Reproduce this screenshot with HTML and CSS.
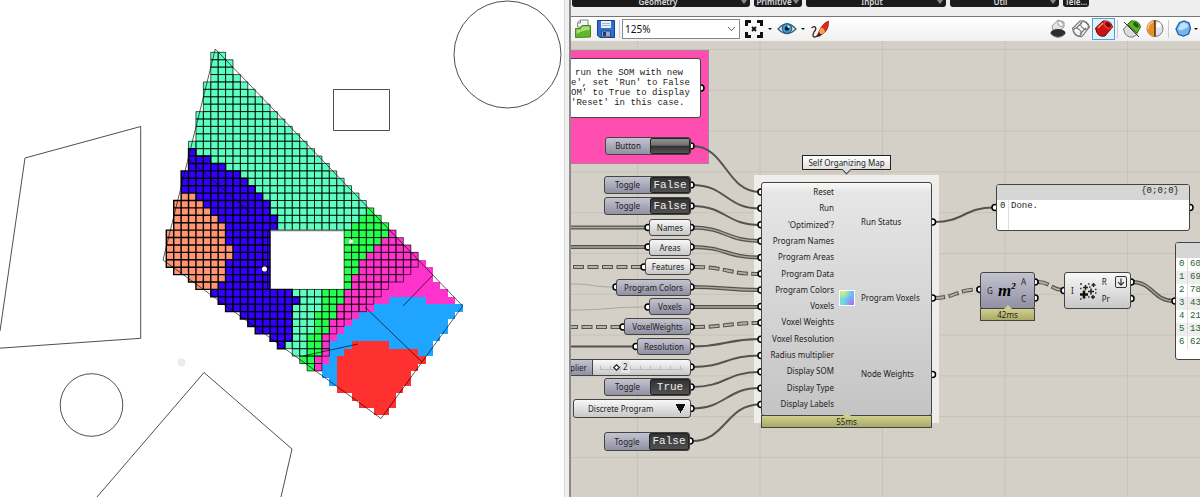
FILE: index.html
```html
<!DOCTYPE html>
<html lang="en">
<head>
<meta charset="utf-8">
<title>Self Organizing Map</title>
<link rel="stylesheet" href="styles.css">
</head>
<body>
<main class="workspace">
  <section class="viewport" aria-label="Site plan">
    <svg class="plan" width="564" height="497" viewBox="0 0 564 497" role="img" aria-label="Voxel program map">
      <g class="site">
        <path d="M25 158L140.700 126.500V338.300L-5 348.500M25 158L0 331"/>
        <circle cx="91.500" cy="405" r="31.300"/>
        <path d="M97 497L204 372.500L292 449L281 497"/>
        <circle cx="507.500" cy="54.500" r="53.500"/>
        <path d="M333.500 89.500h56v41h-56z"/>
      </g>
      <circle cx="181.500" cy="362.500" r="4" fill="#ebebeb"/>
      <g id="voxels" transform="translate(166.300 52.300) scale(7.410)"></g>
      <g class="outline">
        <path d="M215.300 49L462.700 306L381 418.500L163 260Z"/>
        <path d="M188 159L250 212M433 275L403 306M365 307L422 362M303 356L358 344"/>
      </g>
      <path d="M270.500 230.500h73.500" stroke="#777" stroke-width="1.500"/>
      <path d="M267.500 231v59" stroke="#000" stroke-width=".8"/>
      <circle cx="264.500" cy="269" r="2.500" fill="#fff"/>
      <circle cx="351" cy="241.500" r="2.200" fill="#f4e8ee"/>
    </svg>
  </section>
  <div class="splitter"></div>
  <section class="editor">
    <div class="ribbon">
      <span class="tab tab-geometry">Geometry<i></i></span>
      <span class="tab tab-primitive">Primitive<i></i></span>
      <span class="tab tab-input">Input<i></i></span>
      <span class="tab tab-util">Util<i></i></span>
      <span class="tab tab-tele">Tele...</span>
    </div>
    <div class="toolbar">
      <button class="tool" aria-label="Open"><svg width="20" height="20" viewBox="0 0 20 20"><path d="M4.500 8V3.500l3-2.500H15v8z" fill="#f5f5f5" stroke="#888"/><path d="M7.500 1v3h-3" fill="none" stroke="#888"/><path d="M2.500 9.500h4l2.500-3h8.500V18l-15 .5z" fill="#62b52f" stroke="#3f8a1a"/><path d="M3.500 10.500h4l2-3h7V11Q10 11 3.500 15z" fill="#a5dd78"/></svg></button>
      <button class="tool" aria-label="Save"><svg width="20" height="20" viewBox="0 0 20 20"><path d="M1.500 1.500h17v17H4l-2.500-2z" fill="#2f6fd0" stroke="#153f92"/><path d="M5 2h10v7H5z" fill="#e9eef5"/><path d="M6 4.500h8M6 6.500h8" stroke="#a9b4c4"/><path d="M5.500 12h9v6h-9z" fill="#9da8b8" stroke="#244b8c"/><path d="M7 13h3v4H7z" fill="#1c3a78"/></svg></button>
      <span class="separator"></span>
      <select class="zoom" aria-label="Zoom"><option>125%</option></select>
      <button class="tool" aria-label="Zoom extents"><svg width="20" height="20" viewBox="0 0 20 20"><path d="M2.500 7V2.500H7M13 2.500h4.500V7M17.500 13v4.500H13M7 17.500H2.500V13" fill="none" stroke="#111" stroke-width="3"/><path d="M8 8l4 4M12 8l-4 4" stroke="#111" stroke-width="1.800"/></svg></button>
      <i class="caret"></i>
      <button class="tool" aria-label="Preview"><svg width="20" height="20" viewBox="0 0 20 20"><path d="M1 10Q10 0 19 10Q10 19 1 10z" fill="#dcebf3" stroke="#4d6470" stroke-width="1.300"/><circle cx="10" cy="9.500" r="4.800" fill="#39a0d6" stroke="#17587f"/><circle cx="10" cy="9.500" r="2.200" fill="#061722"/><circle cx="11.500" cy="7.800" r="1.100" fill="#fff"/></svg></button>
      <i class="caret"></i>
      <button class="tool" aria-label="Sketch"><svg width="20" height="20" viewBox="0 0 20 20"><path d="M18.500 2q.5 6-2.500 10l-4 3.500q-3 .5-3-3l2-4q3-5 7.500-6.500z" fill="#dc2b20" stroke="#8d1913" stroke-width=".7"/><path d="M11 8.500q3 .5 4 4L12 15.500q-3 .5-3-3z" fill="#f9a04e"/><path d="M9 12q0 3 3.500 3.500Q9 18.500 5.500 18q2-2 3.500-6z" fill="#671b15"/><path d="M1.500 9q3-2.500 4-.5t-1.500 4.500q-2 4 0 5 2 .5 5-2.500" fill="none" stroke="#40211d" stroke-width="1.300"/></svg></button>
      <span class="spacer"></span>
      <button class="tool" aria-label="No preview"><svg width="20" height="20" viewBox="0 0 20 20"><path d="M4 7l6-6 6 2v5l-5 4-6-1z" fill="#e2e2e2" stroke="#999"/><ellipse cx="12.500" cy="4.800" rx="2" ry="3.200" transform="rotate(-45 12.500 4.800)" fill="#f8f8f8" stroke="#aaa"/><ellipse cx="10" cy="14" rx="7.500" ry="4" fill="#2c2f31"/><path d="M3 15q7 7 14 0" fill="none" stroke="#888"/></svg></button>
      <button class="tool" aria-label="Wireframe preview"><svg width="20" height="20" viewBox="0 0 20 20"><g fill="none" stroke="#777" stroke-width="1.200"><path d="M1.500 9.500L9 2q7-1.500 9.500 6L11 17.500q-8 1-9.500-8z"/><ellipse cx="13.500" cy="6.500" rx="3" ry="4.500" transform="rotate(-45 13.500 6.500)"/><ellipse cx="6.500" cy="13" rx="3" ry="4.500" transform="rotate(-45 6.500 13)"/><path d="M5 9.500l6-6M9 15l6-6"/></g></svg></button>
      <button class="tool selected" aria-label="Shaded preview" aria-pressed="true"><svg width="20" height="20" viewBox="0 0 20 20"><path d="M1.500 9L9 2q8-1 9.500 6L11 17q-8 2-9.500-8z" fill="#c91313" stroke="#6d0909"/><ellipse cx="13.500" cy="6" rx="3.500" ry="5" transform="rotate(-45 13.500 6)" fill="#e33b30"/><ellipse cx="14" cy="5.700" rx="2" ry="3.200" transform="rotate(-45 14 5.700)" fill="#760707"/><path d="M4 9l5-5" stroke="#f18a80" stroke-width="1.600"/></svg></button>
      <span class="separator"></span>
      <button class="tool" aria-label="Preview selected"><svg width="20" height="20" viewBox="0 0 20 20"><path d="M1.500 10l4-4 10 9-4.500 3q-8 1-9.500-8z" fill="#ddd" stroke="#777"/><path d="M5.500 5.500L9 2q8-1 9.500 6L15 14z" fill="#5db52a" stroke="#286c0a"/><ellipse cx="14" cy="5.800" rx="2" ry="3.300" transform="rotate(-45 14 5.800)" fill="#22630a"/><path d="M2 3l15 15" stroke="#333"/></svg></button>
      <button class="tool" aria-label="Preview settings"><svg width="20" height="20" viewBox="0 0 20 20"><circle cx="10" cy="9.500" r="8" fill="#e4e4e4" stroke="#777"/><path d="M10 1.500a8 8 0 0 0 0 16z" fill="#f28c20"/><path d="M10 1.500v16" stroke="#4a2b10" stroke-width="1.500"/><path d="M8 3a7 7 0 0 0-5 7" fill="none" stroke="#fac888" stroke-width="1.500"/><circle cx="13.500" cy="6" r="2.500" fill="#fff"/></svg></button>
      <span class="separator"></span>
      <button class="tool" aria-label="Mesh quality"><svg width="20" height="20" viewBox="0 0 20 20"><path d="M6.500 3.500L11 2l5 2 1.500 5.500-2 5.500-5 2-5-1.500L3 10z" fill="#72b6ef" stroke="#235fa6" stroke-width="1.300"/><path d="M7.500 5L11 3.500l3.500 1.500.5 3-7 3.500L5 10z" fill="#bfe2fb"/></svg></button>
      <i class="caret last"></i>
    </div>

    <div class="canvas">
      <div class="group"></div>
      <div class="halo"></div>
      <svg class="wires" width="640" height="456" viewBox="571 41 640 456" aria-hidden="true">
        <defs>
          <path id="w-names" d="M571 227.500H647M692 227.500C726 227.500 726 241 760 241"/>
          <path id="w-areas" d="M571 247H647M692 247C726 247 726 257.500 760 257.500"/>
          <path id="w-colors" d="M692 287C726 287 726 290 760 290"/>
          <path id="w-voxels" d="M692 307H760"/>
          <path id="w-result" d="M1132 282C1153 282 1153 301 1174 301"/>
          <path id="w-features" d="M573 267H643"/>
          <path id="w-weights" d="M567 327H622"/>
          <path id="w-data" d="M694 267C727 267 727 274 760 274"/>
          <path id="w-vw" d="M694 327C727 327 727 323 760 323"/>
          <path id="w-pv" d="M934 298C956 298 956 289.500 978 289.500"/>
          <path id="w-area" d="M1038 282C1050 282 1052 290 1063 290"/>
        </defs>
        <g class="single">
          <path d="M692 146C726 146 726 192 760 192"/>
          <path d="M692 185C726 185 726 208.500 760 208.500"/>
          <path d="M692 206C726 206 726 225 760 225"/>
          <path d="M571 346.500H635M692 346.500C726 346.500 726 339 760 339"/>
          <path d="M692 367C726 367 726 355.500 760 355.500"/>
          <path d="M692 387C726 387 726 372 760 372"/>
          <path d="M692 408.500C726 408.500 726 388 760 388"/>
          <path d="M692 441C726 441 726 404.500 760 404.500"/>
          <path d="M934 222C964 222 964 207.500 994 207.500"/>
        </g>
        <path class="faint" d="M571 284C593 284 593 287 614 287M571 310C609 310 609 307 647 307"/>
        <g class="double"><use href="#w-names"/><use href="#w-areas"/><use href="#w-colors"/><use href="#w-voxels"/><use href="#w-result"/></g>
        <g class="core"><use href="#w-names"/><use href="#w-areas"/><use href="#w-colors"/><use href="#w-voxels"/><use href="#w-result"/></g>
        <g class="tree"><use href="#w-features"/><use href="#w-weights"/><use href="#w-data"/><use href="#w-vw"/><use href="#w-pv"/><use href="#w-area"/></g>
        <g class="tree-core"><use href="#w-features"/><use href="#w-weights"/><use href="#w-data"/><use href="#w-vw"/><use href="#w-pv"/><use href="#w-area"/></g>
        <g class="grips" id="grips"></g>
      </svg>

      <div class="note"><span class="first">run the SOM with new</span><span>e', set 'Run' to False</span><span>OM' to True to display</span><span>'Reset' in this case.</span></div>

      <div class="node split n-button"><label for="b0">Button</label><button id="b0" class="push" aria-label="Button"></button></div>
      <div class="node split n-toggle1"><label for="b1">Toggle</label><button id="b1">False</button></div>
      <div class="node split n-toggle2"><label for="b2">Toggle</label><button id="b2">False</button></div>
      <div class="node param light n-names">Names</div>
      <div class="node param light n-areas">Areas</div>
      <div class="node param light n-features">Features</div>
      <div class="node param n-colors">Program Colors</div>
      <div class="node param n-voxels">Voxels</div>
      <div class="node param n-weights">VoxelWeights</div>
      <div class="node param n-resolution">Resolution</div>
      <div class="node light n-slider"><label for="s1">plier</label><div class="slide"><input id="s1" type="range" min="1" max="8" value="2"><output for="s1">2</output></div></div>
      <div class="node split n-toggle3"><label for="b3">Toggle</label><button id="b3">True</button></div>
      <select class="node light n-list" aria-label="Display type"><option>Discrete Program</option></select>
      <div class="node split n-toggle4"><label for="b4">Toggle</label><button id="b4">False</button></div>

      <div class="tooltip">Self Organizing Map</div>
      <article class="node som">
        <ul class="inputs"><li>Reset</li><li>Run</li><li>'Optimized'?</li><li>Program Names</li><li>Program Areas</li><li>Program Data</li><li>Program Colors</li><li>Voxels</li><li>Voxel Weights</li><li>Voxel Resolution</li><li>Radius multiplier</li><li>Display SOM</li><li>Display Type</li><li>Display Labels</li></ul>
        <div class="som-icon"></div>
        <ul class="outputs"><li>Run Status</li><li>Program Voxels</li><li>Node Weights</li></ul>
      </article>
      <div class="timer som-timer">55ms</div>

      <div class="node panel status"><header>{0;0;0}</header><div class="line"><span>0</span><b>Done.</b></div></div>

      <article class="node area"><span>G</span><em>m<sup>2</sup></em><ul><li>A</li><li>C</li></ul></article>
      <div class="timer area-timer">42ms</div>

      <article class="node light result"><span>I</span>
        <svg width="18" height="18" viewBox="0 0 18 18"><path d="M5 8.500v8M1 12.500h8" stroke="#111" stroke-width="2.600"/><path d="M6.500 3v5M4 5.500h5M12 6.500v6M9 9.500h6M14.500 1v4M12.500 3h4M14 13v4M12 15h4" stroke="#222" stroke-width="1.500"/><path d="M1 2h2M9 2h1.500M1 6.500h1.500M16 7.500h1.500M16 11h1.500M9 15h1.500M10 5h1.500M1 17h1.500" stroke="#333" stroke-width="1.500"/></svg>
        <ul><li>R</li><li>Pr</li></ul>
        <svg class="down" width="12" height="12" viewBox="0 0 12 12"><rect x=".5" y=".5" width="11" height="11" rx="1.500" fill="#eee" stroke="#333"/><path d="M6 2.500v6.500M3 6.200l3 3 3-3" fill="none" stroke="#333" stroke-width="1.200"/></svg>
      </article>

      <div class="node panel values"><header></header>
        <div class="line"><span>0</span><b>60</b></div><div class="line"><span>1</span><b>69</b></div><div class="line"><span>2</span><b>78</b></div><div class="line"><span>3</span><b>43</b></div><div class="line"><span>4</span><b>21</b></div><div class="line"><span>5</span><b>13</b></div><div class="line"><span>6</span><b>62</b></div>
      </div>
    </div>
  </section>
</main>
<script src="voxels.js"></script>
</body>
</html>
```
FILE: voxels.js
```js
// Each row: first column, then runs of <count><program>.
// T teal, B blue, O orange, G green, P pink with cell lines, Q pink, U sky, R red, - empty.
const rows = [
  "6 2T", "6 3T", "6 3T", "6 4T", "5 6T", "5 7T", "5 8T", "5 9T",
  "4 11T", "4 12T", "4 13T", "4 14T", "3 16T", "3 1B 16T", "3 3B 15T",
  "3 5B 14T", "2 8B 13T", "2 9B 13T", "2 10B 13T", "2 2O 9B 13T",
  "1 4O 9B 13T", "1 5O 8B 13T 1G", "1 6O 8B 11T 3G", "1 7O 7B 10T 5G",
  "0 8O 6B 10- 6G 1P", "0 8O 6B 10- 5G 3P", "0 9O 5B 10- 4G 5P",
  "0 9O 5B 10- 3G 7P", "0 8O 6B 10- 2G 8P 1Q", "1 7O 6B 10- 2G 7P 3Q",
  "3 5O 6B 10- 1G 7P 4Q", "4 3O 7B 10- 1G 5P 7Q", "6 11B 4T 3G 5P 9Q",
  "7 11B 3T 3G 4P 2Q 5U 4Q", "8 9B 4T 2G 4P 1Q 12U", "10 7B 3T 3G 2P 1Q 13U",
  "11 6B 3T 2G 2P 1Q 13U", "12 5B 3T 2G 1P 1Q 14U", "14 3B 2T 2G 1P 1Q 14U",
  "15 1B 3T 2G 1P 3U 5R 6U", "17 2T 2G 1P 2U 10R 2U", "18 2G 1P 1Q 1U 12R",
  "19 1G 1P 2U 11R", "21 2U 10R", "22 1U 10R", "23 9R", "25 6R", "26 5R", "28 2R"
];
const fills = { T: "#5cffc0", B: "#3300ff", O: "#ff9573", G: "#26ff4f", P: "#ff33cc", Q: "#ff33cc", U: "#1fa5ff", R: "#ff3030" };
const area = {};
const lines = { thin: "", thick: "" };
rows.forEach((row, y) => {
  const [start, ...runs] = row.split(" ");
  let x = Number(start);
  for (const run of runs) {
    const count = parseInt(run, 10);
    const kind = run.slice(-1);
    if (kind !== "-") {
      area[kind] = (area[kind] || "") + `M${x} ${y}h${count}v1h${-count}z`;
      if ("TBOGP".includes(kind)) {
        const weight = "BO".includes(kind) ? "thick" : "thin";
        for (let i = 0; i < count; i++) lines[weight] += `M${x + i} ${y}h1v1h-1z`;
      }
    }
    x += count;
  }
});
function add(parent, tag, attributes) {
  const element = document.createElementNS("http://www.w3.org/2000/svg", tag);
  for (const name in attributes) element.setAttribute(name, attributes[name]);
  parent.append(element);
}
const map = document.getElementById("voxels");
for (const kind in area) add(map, "path", { d: area[kind], fill: fills[kind], "shape-rendering": "crispEdges" });
for (const weight in lines) add(map, "path", { d: lines[weight], class: "cells-" + weight });

// Connection points of every component.
const grips = [
  [701, 88], [691, 146], [691, 185], [691, 206], [691, 227.5], [691, 247], [691, 267], [691, 287],
  [691, 307], [691, 327], [691, 346.5], [691, 367], [691, 387], [691, 408.5], [690, 441],
  [648, 227.5], [648, 247], [644, 267], [616, 287], [648, 307], [623, 327], [636, 346.5],
  [932.5, 222], [932.5, 298], [932.5, 374.5], [995, 207.5], [1190, 207.5],
  [980, 289.5], [1035, 282], [1035, 298], [1064, 290.5], [1131, 282], [1131, 298.5], [1175, 301]
];
for (let i = 0; i < 14; i++) grips.push([761, 192 + i * 16.35]);
for (const [cx, cy] of grips) add(document.getElementById("grips"), "circle", { cx, cy, r: 3 });
```
FILE: styles.css
```css
* { box-sizing: border-box; }
body { margin: 0; font: 8px/12px "Noto Sans", "Open Sans", sans-serif; color: #222; background: #fff; }
button, select, input { font: inherit; color: inherit; margin: 0; padding: 0; border: 0; background: none; }
ul { list-style: none; margin: 0; padding: 0; }

.workspace { display: grid; grid-template-columns: 47% 7px 1fr; min-height: 100vh; overflow: hidden; }
.viewport { overflow: hidden; background: #fff; }
.plan { display: block; }
.site, .outline { fill: none; stroke: #222; stroke-width: .8; }
.outline { stroke: #000; stroke-opacity: .8; }
.cells-thin { fill: none; stroke: #000; stroke-opacity: .75; stroke-width: .12; }
.cells-thick { fill: none; stroke: #000; stroke-width: .19; }
.splitter { background: #f0f0f0; border-left: 1px solid #d5d5d5; border-right: 2px solid #8a8a8a; }

.editor { display: flex; flex-direction: column; min-width: 0; overflow: hidden; background: #eee; }
.ribbon { display: flex; align-items: flex-start; gap: 4px; height: 17px; padding-left: 1px; border-bottom: 1px solid #777; }
.tab { display: flex; align-items: flex-end; justify-content: center; height: 7px; overflow: hidden; position: relative; border-radius: 0 0 3px 3px; background: #1b1b1b; color: #ddd; font-size: 8px; font-weight: 600; line-height: 10px; }
.tab i { position: absolute; right: 3px; top: 0; border: 3px solid transparent; border-top: 4px solid #888; border-bottom: 0; }
.tab-geometry { width: 178px; padding-right: 6px; }
.tab-primitive { width: 48px; padding-right: 8px; }
.tab-input { width: 140px; padding-right: 8px; }
.tab-util { width: 109px; padding-right: 8px; }
.tab-tele { width: 26px; }

.toolbar { display: flex; align-items: center; height: 24px; background: linear-gradient(#fff, #f0f0f0); }
.tool { display: grid; place-items: center; flex: none; width: 23px; height: 22px; }
.selected { border: 1px solid #4ca3e0; background: #e4f1fb; }
.separator { width: 1px; height: 18px; margin: 0 2px; background: #ccc; flex: none; }
.caret { flex: none; width: 4px; margin: 0 3px; border: 2px solid transparent; border-top: 2px solid #111; border-bottom: 0; }
.last { margin: 0 2px 0 0; }
.spacer { flex: 1; }
.zoom { width: 118px; height: 20px; margin-right: 2px; padding-left: 2px; border: 1px solid #888; appearance: none; font-size: 10px; color: #111; background: linear-gradient(45deg, transparent 42%, #666 42% 58%, transparent 58%) 105px 7px / 4px 4px no-repeat, linear-gradient(-45deg, transparent 42%, #666 42% 58%, transparent 58%) 108px 7px / 4px 4px no-repeat, #fff; }

.canvas { position: relative; flex: 1; overflow: hidden; background-color: #d4d0c8; background-image: linear-gradient(90deg, #c5c2ba 1px, transparent 1px), linear-gradient(#c5c2ba 1px, transparent 1px); background-size: 122.5px 100%, 100% 40.8px; background-position: 66px 0, 0 8px; }
.wires { position: absolute; left: 0; top: 0; fill: none; }
.single { stroke: #53534f; stroke-width: 2; }
.faint { stroke: #aaa79f; stroke-width: 1; }
.double { stroke: #53534f; stroke-width: 4; }
.core { stroke: #aaa79f; stroke-width: 1.4; }
.tree { stroke: #53534f; stroke-width: 4; stroke-dasharray: 11 3.500; }
.tree-core { stroke: #b5b2aa; stroke-width: 1.8; stroke-dasharray: 9 5.500; stroke-dashoffset: -1; }
.grips { fill: #fff; stroke: #000; stroke-width: 1.5; }

.group { position: absolute; left: -2px; top: 9px; width: 140px; height: 114px; background: #ff4db0; border: 1px solid #a98496; }
.halo { position: absolute; left: 183px; top: 134px; width: 185px; height: 248px; background: #efede9; }
.note { position: absolute; left: -4px; top: 17px; width: 134px; height: 60px; padding: 9px 0 0 4px; border: 1px solid #444; border-radius: 3px; background: #fff; font: 9px/10px "Liberation Mono", monospace; white-space: pre; }
.note span { display: block; margin-left: -1px; }
.note .first { margin-left: 3px; }

.node { position: absolute; display: flex; border: 1px solid #444; border-radius: 3px; background: linear-gradient(#c4c4d0, #9090a4); }
.light { background: linear-gradient(#f8f8f8, #c8c8c8); }
.param { justify-content: center; align-items: center; height: 17px; }
.split { align-items: center; height: 18px; }
.split label { flex: 1; text-align: center; }
.split button { width: 40px; height: 100%; border: 1px solid #222; border-radius: 2px; background: linear-gradient(#333, #505050); color: #eee; font: 11px/13px "Liberation Mono", monospace; }
.split .push { background: linear-gradient(#909090, #707070 45%, #303030 50%, #555); }
.n-button { left: 34px; top: 96px; width: 86px; }
.n-toggle1 { left: 33px; top: 135px; width: 87px; }
.n-toggle2 { left: 33px; top: 156px; width: 87px; }
.n-names { left: 78px; top: 178px; width: 42px; }
.n-areas { left: 78px; top: 198px; width: 42px; }
.n-features { left: 74px; top: 217px; width: 46px; }
.n-colors { left: 45px; top: 238px; width: 75px; }
.n-voxels { left: 78px; top: 257px; width: 42px; }
.n-weights { left: 53px; top: 277px; width: 67px; }
.n-resolution { left: 66px; top: 297px; width: 54px; }
.n-slider { left: -4px; top: 318px; width: 124px; height: 17px; }
.n-slider label { width: 25px; padding-left: 2px; line-height: 15px; border-right: 1px solid #444; background: linear-gradient(#c4c4d0, #9090a4); }
.slide { position: relative; flex: 1; padding: 2px 7px; }
.slide input { display: block; width: 100%; height: 8px; appearance: none; border-bottom: 1px solid #bbb; background: linear-gradient(90deg, #bbb 1px, transparent 1px) 0 4px / 10px 4px repeat-x; }
.slide input::-webkit-slider-thumb { appearance: none; width: 5px; height: 5px; border: 1px solid #000; background: #fff; transform: translate(3px, 2px) rotate(45deg); }
.slide output { position: absolute; left: 28px; top: 1px; padding: 0 2px; background: #e4e4e4; }
.n-toggle3 { left: 33px; top: 337px; width: 87px; }
.n-list { left: 2px; top: 358px; width: 118px; height: 19px; padding-left: 14px; appearance: none; }
.n-list { background: conic-gradient(from -30deg at 50% 100%, #111 60deg, transparent 0) 101px 4px / 11px 9px no-repeat, linear-gradient(#f8f8f8, #c8c8c8); }
.n-toggle4 { left: 33px; top: 391px; width: 86px; height: 19px; }

.tooltip { position: absolute; left: 231px; top: 114px; width: 89px; height: 15px; border: 1px solid #222; background: linear-gradient(#fff, #e0e0e0); line-height: 13px; text-align: center; white-space: nowrap; }
.tooltip::after { content: ""; position: absolute; left: 40px; bottom: -4px; width: 6px; height: 6px; border: solid #444; border-width: 0 1px 1px 0; background: #e0e0e0; transform: rotate(45deg); }
.som { left: 190px; top: 141px; width: 171px; height: 234px; padding: 1px 0 3px; background: linear-gradient(#fafafa, #e6e6e6 9px, #c4c4c4); }
.som ul, .area ul, .result ul { display: grid; grid-auto-rows: 1fr; align-items: center; }
.inputs { width: 72px; text-align: right; white-space: nowrap; }
.som-icon { align-self: center; width: 16px; height: 16px; margin: 0 6px 0 5px; border: 1px solid #fff; background: radial-gradient(circle at 20% 0, #eef36a, transparent 50%), radial-gradient(circle at 100% 100%, #b45df0, transparent 55%), linear-gradient(45deg, #65e9d9, #67b9ff); }
.timer { position: absolute; height: 13px; border: 1px solid #444; background: linear-gradient(#d0d08c, #a9a96a); text-align: center; line-height: 11px; }
.timer::before { content: ""; position: absolute; left: 50%; top: -4px; margin-left: -4px; border: 4px solid transparent; border-top: 0; border-bottom-color: #d0d08c; }
.som-timer { left: 190px; top: 374px; width: 171px; }
.area-timer { left: 409px; top: 267px; width: 55px; }

.panel { display: block; overflow: hidden; background: #fff; font: 9px/13px "Liberation Mono", monospace; }
.panel header { height: 15px; padding-right: 10px; background: #d6d6d6; text-align: right; }
.line { display: flex; height: 13px; }
.line span { width: 12px; padding-left: 3px; border-right: 1px solid #ddd; }
.line b { flex: 1; padding-left: 2px; font-weight: 400; }
.status { left: 425px; top: 143px; width: 194px; height: 47px; }
.status .line { height: 31px; }
.values { left: 604px; top: 201px; width: 60px; height: 118px; color: #276334; }
.values .line:nth-child(odd) { background: #eee; }
.area { left: 409px; top: 231px; width: 55px; height: 37px; padding: 1px 8px 1px 6px; align-items: center; justify-content: space-between; }
.area em { font: italic bold 17px/18px "Liberation Serif", serif; color: #000; }
.area sup { font-size: 9px; line-height: 0; }
.area ul, .result ul { height: 100%; }
.result { left: 493px; top: 231px; width: 67px; height: 37px; padding: 1px 3px 1px 6px; align-items: center; }
.result > svg { margin: 0 5px; flex: none; }
.result ul { width: 14px; }
.result .down { align-self: flex-start; margin: 2px 0 0; }
```
